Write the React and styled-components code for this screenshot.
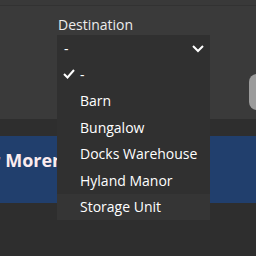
import React from "react";
import styled, { createGlobalStyle } from "styled-components";

const GlobalStyle = createGlobalStyle`
  html, body {
    margin: 0;
    padding: 0;
    background: #2e2e2e;
    font-family: "Open Sans", "Noto Sans", sans-serif;
    overflow: hidden;
  }
`;

const Page = styled.div`
  position: relative;
  width: 256px;
  height: 256px;
  overflow: hidden;
`;

const TopStrip = styled.div`
  height: 5px;
  background: #393939;
  border-bottom: 1px solid #323232;
`;

const Panel = styled.div`
  height: 113px;
  background: #3a3a3a;
  display: flex;
  align-items: flex-start;
`;

const Field = styled.div`
  flex: none;
  margin-left: 57px;
  padding-top: 9px;
  display: flex;
  flex-direction: column;
  width: 153px;
`;

const Label = styled.label`
  color: #ececec;
  font-size: 14px;
  line-height: 20px;
  padding-left: 1px;
`;

const SelectBox = styled.div`
  position: relative;
  height: 26px;
  background: #303030;
  display: flex;
  align-items: center;
  justify-content: space-between;
  padding: 0 6px 0 7px;
  color: #fff;
  font-size: 14px;
`;

const GreyButton = styled.div`
  flex: none;
  margin-left: 39px;
  margin-top: 68px;
  width: 30px;
  height: 36px;
  border-radius: 8px;
  background: #9b9b9b;
`;

const Band = styled.div`
  margin-top: 17px;
  height: 67px;
  background: #213f6d;
  overflow: hidden;
  white-space: nowrap;
`;

const BandTitle = styled.div`
  margin-left: -21px;
  padding-top: 12px;
  font-size: 18px;
  font-weight: 700;
  color: #fbecef;
`;

const Menu = styled.ul`
  position: absolute;
  left: 57px;
  top: 61px;
  width: 153px;
  margin: 0;
  padding: 0;
  list-style: none;
  background: #303030;
`;

const Option = styled.li`
  height: 26.5px;
  display: flex;
  align-items: center;
  padding-left: 6px;
  color: #fff;
  font-size: 14px;
  background: ${(p) => (p.$active ? "#353535" : "transparent")};
`;

const CheckSlot = styled.span`
  width: 17px;
  display: flex;
  align-items: center;
`;

const options = ["-", "Barn", "Bungalow", "Docks Warehouse", "Hyland Manor", "Storage Unit"];

export default function App() {
  return (
    <Page>
      <GlobalStyle />
      <TopStrip />
      <Panel>
        <Field>
          <Label>Destination</Label>
          <SelectBox>
            <span>-</span>
            <svg width="12" height="9" viewBox="0 0 12 9">
              <path d="M1 2 L6 7 L11 2" fill="none" stroke="#fff" strokeWidth="2" />
            </svg>
          </SelectBox>
        </Field>
        <GreyButton />
      </Panel>
      <Band>
        <BandTitle>Dr Moreno</BandTitle>
      </Band>
      <Menu>
        {options.map((o, i) => (
          <Option key={o} $active={i === options.length - 1}>
            <CheckSlot>
              {i === 0 && (
                <svg width="12" height="10" viewBox="0 0 12 10">
                  <path d="M1 5 L4.5 8.5 L11 1" fill="none" stroke="#fff" strokeWidth="2" />
                </svg>
              )}
            </CheckSlot>
            {o}
          </Option>
        ))}
      </Menu>
    </Page>
  );
}
